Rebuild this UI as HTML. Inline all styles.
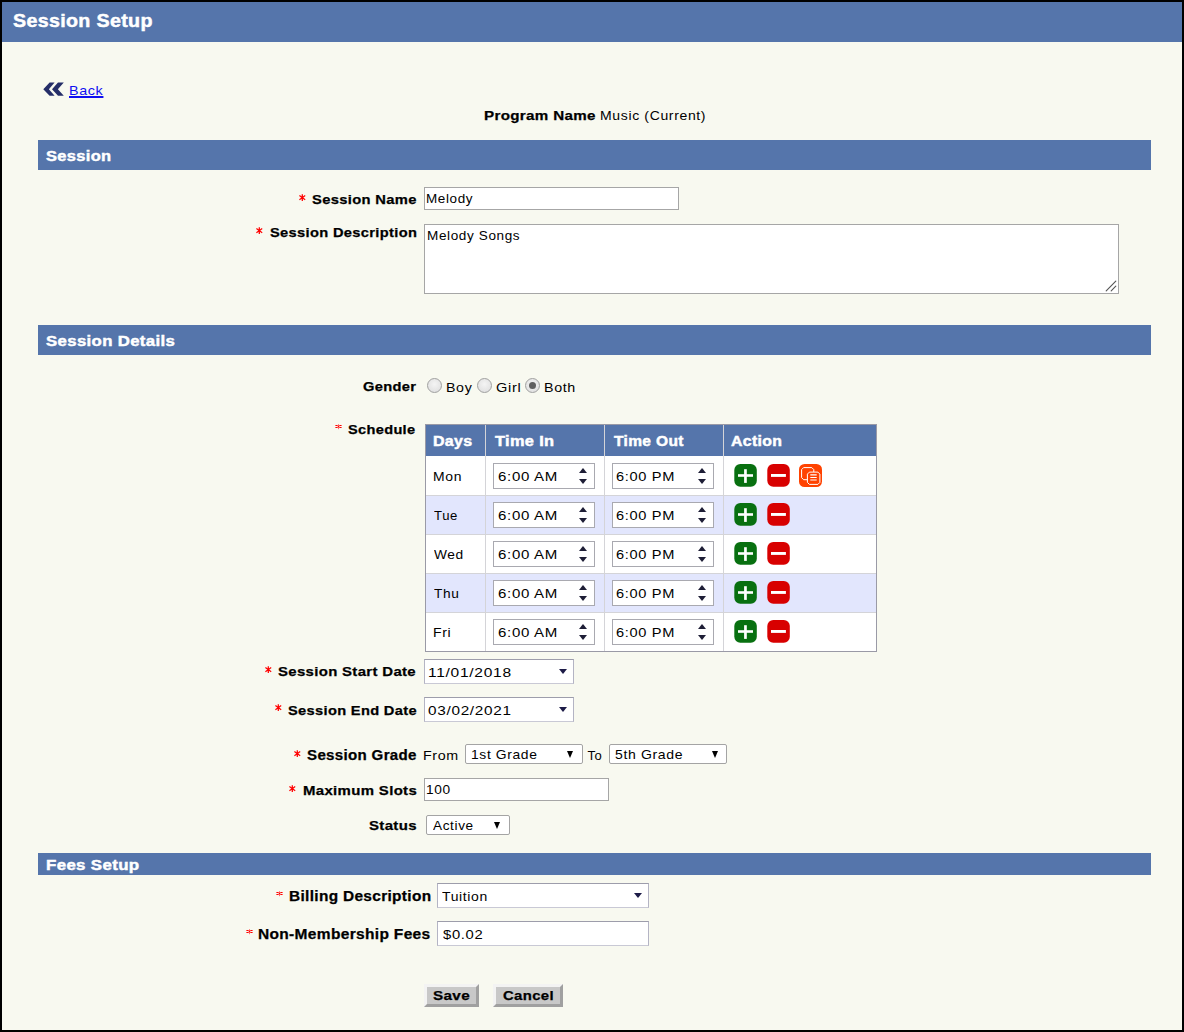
<!DOCTYPE html>
<html><head><meta charset="utf-8"><style>
html,body{margin:0;padding:0;}
body{width:1184px;height:1032px;position:relative;overflow:hidden;background:#000;font-family:"Liberation Sans",sans-serif;color:#000;}
#pg{position:absolute;left:2px;top:2px;width:1180px;height:1028px;background:#f8f9f0;}
.a{position:absolute;}
.tx{position:absolute;white-space:nowrap;transform-origin:0 0;}
.bar{position:absolute;background:#5575ab;}
.inp{position:absolute;background:#fff;border:1px solid #a6a6a6;box-sizing:border-box;}
.sel{position:absolute;background:#fff;border:1px solid;border-color:#9d9dab #b4b4c4 #c9c9d5 #b4b4c4;box-sizing:border-box;}
.radio{position:absolute;width:15px;height:15px;border-radius:50%;box-sizing:border-box;border:1px solid #a0a0a0;background:radial-gradient(circle at 50% 40%,#f4f4f4 0,#dcdcdc 100%);}
.radio.on::after{content:"";position:absolute;left:3px;top:3px;width:7px;height:7px;border-radius:50%;background:#606060;}
.tin{position:absolute;width:102px;height:26px;box-sizing:border-box;border:1px solid #a9a9b0;background:#fff;}
.tin .up{position:absolute;left:85px;top:4px;width:0;height:0;border-left:4.8px solid transparent;border-right:4.8px solid transparent;border-bottom:5px solid #1e1e36;}
.tin .dn{position:absolute;left:85px;top:15px;width:0;height:0;border-left:4.8px solid transparent;border-right:4.8px solid transparent;border-top:5px solid #1e1e36;}
.btn{position:absolute;width:23px;height:23px;border-radius:6px;}
.gplus{background:#0b6e12;}
.gplus::before{content:"";position:absolute;left:4px;top:10px;width:15px;height:3px;background:#fff;}
.gplus::after{content:"";position:absolute;left:10px;top:4px;width:3px;height:15px;background:#fff;}
.rminus{background:#d60a0a;}
.rminus::before{content:"";position:absolute;left:4px;top:10px;width:15px;height:3px;background:#fff;}
.ocopy{background:#ff4a0a;}
.tri{position:absolute;width:0;height:0;border-left:4.8px solid transparent;border-right:4.8px solid transparent;border-top:5.5px solid #1d1b47;}
.gsel{position:absolute;height:20px;box-sizing:border-box;border:1px solid #a4a4a4;border-radius:2px;background:#fff;}
.bt{position:absolute;width:0;height:0;border-left:3.5px solid transparent;border-right:3.5px solid transparent;border-top:7px solid #000;}
.pbtn{position:absolute;height:23px;box-sizing:border-box;border:3px solid;border-color:#f3f3f3 #a0a0a0 #a0a0a0 #f3f3f3;background:#c8c8c8;}
.st2{position:absolute;}
</style></head><body>
<div id="pg"></div>
<div class="bar" style="left:2px;top:2px;width:1180px;height:40px;"></div>
<svg class="a" style="left:40px;top:78px" width="30" height="22" viewBox="0 0 30 22">
<polygon points="3.3,11.2 9.6,4.6 14.6,4.6 8.9,11.2 14.6,17.7 9.6,17.7" fill="#252e68"/>
<polygon points="12.0,11.2 18.0,4.6 23.8,4.6 17.9,11.2 23.8,17.7 18.0,17.7" fill="#252e68"/></svg>
<div class="bar" style="left:38px;top:140px;width:1113px;height:30px;"></div>
<div class="inp" style="left:424px;top:187px;width:255px;height:23px;"></div>
<div class="inp" style="left:424px;top:224px;width:695px;height:70px;"></div>
<div class="bar" style="left:38px;top:325px;width:1113px;height:30px;"></div>
<div class="radio" style="left:427px;top:378px;"></div>
<div class="radio" style="left:477px;top:378px;"></div>
<div class="radio on" style="left:525px;top:378px;"></div>
<div class="a" style="left:425px;top:424px;width:452px;height:228px;box-sizing:border-box;border:1px solid #9a9aa6;background:#fff;"></div>
<div class="a" style="left:426px;top:425px;width:450px;height:31px;background:#5575ab;"></div>
<div class="a" style="left:426px;top:496px;width:450px;height:38px;background:#e2e6fd;"></div>
<div class="a" style="left:426px;top:574px;width:450px;height:38px;background:#e2e6fd;"></div>
<div class="a" style="left:426px;top:495px;width:450px;height:1px;background:#d4d4d8;"></div>
<div class="a" style="left:426px;top:534px;width:450px;height:1px;background:#d4d4d8;"></div>
<div class="a" style="left:426px;top:573px;width:450px;height:1px;background:#d4d4d8;"></div>
<div class="a" style="left:426px;top:612px;width:450px;height:1px;background:#d4d4d8;"></div>
<div class="a" style="left:485px;top:425px;width:1px;height:226px;background:#d4d4d8;"></div>
<div class="a" style="left:604px;top:425px;width:1px;height:226px;background:#d4d4d8;"></div>
<div class="a" style="left:723px;top:425px;width:1px;height:226px;background:#d4d4d8;"></div>
<div class="tin" style="left:493px;top:463px;"><i class="up"></i><i class="dn"></i></div>
<div class="tin" style="left:612px;top:463px;"><i class="up"></i><i class="dn"></i></div>
<svg class="a" style="left:734px;top:464px" width="23" height="23" viewBox="0 0 23 23"><rect x="0.3" y="0" width="22.5" height="22.7" rx="6" fill="#087010"/><rect x="4" y="10.2" width="15" height="2.6" fill="#fff"/><rect x="10.1" y="5.2" width="2.7" height="13.7" fill="#fff"/></svg>
<svg class="a" style="left:767px;top:464px" width="23" height="23" viewBox="0 0 23 23"><rect x="0.3" y="0" width="22.5" height="22.7" rx="6" fill="#d80000"/><rect x="4" y="10" width="14.9" height="2.9" fill="#fff"/></svg>
<div class="tin" style="left:493px;top:502px;"><i class="up"></i><i class="dn"></i></div>
<div class="tin" style="left:612px;top:502px;"><i class="up"></i><i class="dn"></i></div>
<svg class="a" style="left:734px;top:503px" width="23" height="23" viewBox="0 0 23 23"><rect x="0.3" y="0" width="22.5" height="22.7" rx="6" fill="#087010"/><rect x="4" y="10.2" width="15" height="2.6" fill="#fff"/><rect x="10.1" y="5.2" width="2.7" height="13.7" fill="#fff"/></svg>
<svg class="a" style="left:767px;top:503px" width="23" height="23" viewBox="0 0 23 23"><rect x="0.3" y="0" width="22.5" height="22.7" rx="6" fill="#d80000"/><rect x="4" y="10" width="14.9" height="2.9" fill="#fff"/></svg>
<div class="tin" style="left:493px;top:541px;"><i class="up"></i><i class="dn"></i></div>
<div class="tin" style="left:612px;top:541px;"><i class="up"></i><i class="dn"></i></div>
<svg class="a" style="left:734px;top:542px" width="23" height="23" viewBox="0 0 23 23"><rect x="0.3" y="0" width="22.5" height="22.7" rx="6" fill="#087010"/><rect x="4" y="10.2" width="15" height="2.6" fill="#fff"/><rect x="10.1" y="5.2" width="2.7" height="13.7" fill="#fff"/></svg>
<svg class="a" style="left:767px;top:542px" width="23" height="23" viewBox="0 0 23 23"><rect x="0.3" y="0" width="22.5" height="22.7" rx="6" fill="#d80000"/><rect x="4" y="10" width="14.9" height="2.9" fill="#fff"/></svg>
<div class="tin" style="left:493px;top:580px;"><i class="up"></i><i class="dn"></i></div>
<div class="tin" style="left:612px;top:580px;"><i class="up"></i><i class="dn"></i></div>
<svg class="a" style="left:734px;top:581px" width="23" height="23" viewBox="0 0 23 23"><rect x="0.3" y="0" width="22.5" height="22.7" rx="6" fill="#087010"/><rect x="4" y="10.2" width="15" height="2.6" fill="#fff"/><rect x="10.1" y="5.2" width="2.7" height="13.7" fill="#fff"/></svg>
<svg class="a" style="left:767px;top:581px" width="23" height="23" viewBox="0 0 23 23"><rect x="0.3" y="0" width="22.5" height="22.7" rx="6" fill="#d80000"/><rect x="4" y="10" width="14.9" height="2.9" fill="#fff"/></svg>
<div class="tin" style="left:493px;top:619px;"><i class="up"></i><i class="dn"></i></div>
<div class="tin" style="left:612px;top:619px;"><i class="up"></i><i class="dn"></i></div>
<svg class="a" style="left:734px;top:620px" width="23" height="23" viewBox="0 0 23 23"><rect x="0.3" y="0" width="22.5" height="22.7" rx="6" fill="#087010"/><rect x="4" y="10.2" width="15" height="2.6" fill="#fff"/><rect x="10.1" y="5.2" width="2.7" height="13.7" fill="#fff"/></svg>
<svg class="a" style="left:767px;top:620px" width="23" height="23" viewBox="0 0 23 23"><rect x="0.3" y="0" width="22.5" height="22.7" rx="6" fill="#d80000"/><rect x="4" y="10" width="14.9" height="2.9" fill="#fff"/></svg>
<div class="sel" style="left:424px;top:659px;width:150px;height:25px;"><i class="tri" style="left:134px;top:9px"></i></div>
<div class="sel" style="left:424px;top:697px;width:150px;height:25px;"><i class="tri" style="left:134px;top:9px"></i></div>
<div class="gsel" style="left:465px;top:744px;width:118px;"><i class="bt" style="left:101px;top:6px"></i></div>
<div class="gsel" style="left:609px;top:744px;width:118px;"><i class="bt" style="left:102px;top:6px"></i></div>
<div class="inp" style="left:424px;top:778px;width:185px;height:23px;"></div>
<div class="gsel" style="left:426px;top:815px;width:84px;"><i class="bt" style="left:67px;top:6px"></i></div>
<div class="bar" style="left:38px;top:853px;width:1113px;height:22px;"></div>
<div class="sel" style="left:437px;top:883px;width:212px;height:25px;"><i class="tri" style="left:196px;top:9px"></i></div>
<div class="sel" style="left:437px;top:921px;width:212px;height:25px;"></div>
<div class="pbtn" style="left:424px;top:984px;width:55px;"></div>
<div class="pbtn" style="left:493px;top:984px;width:70px;"></div>
<svg class="a" style="left:298.8px;top:193.8px" width="7" height="8" viewBox="0 0 7 8"><path d="M3.3 0.2V7.1M0.4 1.6L6.2 5.7M0.4 5.7L6.2 1.6" stroke="#ff0000" stroke-width="1.25" fill="none"/></svg>
<svg class="a" style="left:256.2px;top:226.5px" width="7" height="8" viewBox="0 0 7 8"><path d="M3.3 0.2V7.1M0.4 1.6L6.2 5.7M0.4 5.7L6.2 1.6" stroke="#ff0000" stroke-width="1.25" fill="none"/></svg>
<svg class="a" style="left:265.4px;top:665.5999999999999px" width="7" height="8" viewBox="0 0 7 8"><path d="M3.3 0.2V7.1M0.4 1.6L6.2 5.7M0.4 5.7L6.2 1.6" stroke="#ff0000" stroke-width="1.25" fill="none"/></svg>
<svg class="a" style="left:275px;top:704.3px" width="7" height="8" viewBox="0 0 7 8"><path d="M3.3 0.2V7.1M0.4 1.6L6.2 5.7M0.4 5.7L6.2 1.6" stroke="#ff0000" stroke-width="1.25" fill="none"/></svg>
<svg class="a" style="left:294px;top:749.5999999999999px" width="7" height="8" viewBox="0 0 7 8"><path d="M3.3 0.2V7.1M0.4 1.6L6.2 5.7M0.4 5.7L6.2 1.6" stroke="#ff0000" stroke-width="1.25" fill="none"/></svg>
<svg class="a" style="left:289px;top:785.1999999999999px" width="7" height="8" viewBox="0 0 7 8"><path d="M3.3 0.2V7.1M0.4 1.6L6.2 5.7M0.4 5.7L6.2 1.6" stroke="#ff0000" stroke-width="1.25" fill="none"/></svg>
<svg class="a" style="left:799px;top:464px" width="23" height="23" viewBox="0 0 23 23">
<rect x="0" y="0" width="23" height="23" rx="5.5" fill="#ff4200"/>
<path d="M4.6 3.6H12.8L14.8 5.6V13.7L12.8 15.7H4.6L2.6 13.7V5.6Z" fill="none" stroke="#fff" stroke-width="1"/>
<path d="M10.4 8.1H18.9L20.9 10.1V18.4L18.9 20.4H10.4L8.4 18.4V10.1Z" fill="#ff4200" stroke="#fff" stroke-width="1"/>
<path d="M11.3 10.8H17.7M11.3 13.5H17.7M11.3 16H17.7" stroke="#fff" stroke-width="1.2"/>
</svg>
<svg class="a" style="left:1104px;top:279px" width="14" height="14" viewBox="0 0 14 14"><path d="M2.2 11.8L11.8 2.2M7.2 11.8L11.8 7.2" stroke="#555" stroke-width="1.15" stroke-linecap="round"/></svg>
<svg class="a" style="left:335px;top:424px" width="7" height="6" viewBox="0 0 7 6"><path d="M3.5 0.2V5.2" stroke="#ff6060" stroke-width="0.9"/><path d="M0.4 1.5H2.7M4.3 1.5H6.6M0.4 3.5H2.7M4.3 3.5H6.6" stroke="#ff0000" stroke-width="1"/><circle cx="3.5" cy="2.5" r="0.8" fill="#ff0000"/></svg>
<svg class="a" style="left:276px;top:891.3px" width="7" height="6" viewBox="0 0 7 6"><path d="M3.5 0.2V5.2" stroke="#ff6060" stroke-width="0.9"/><path d="M0.4 1.5H2.7M4.3 1.5H6.6M0.4 3.5H2.7M4.3 3.5H6.6" stroke="#ff0000" stroke-width="1"/><circle cx="3.5" cy="2.5" r="0.8" fill="#ff0000"/></svg>
<svg class="a" style="left:246px;top:929px" width="7" height="6" viewBox="0 0 7 6"><path d="M3.5 0.2V5.2" stroke="#ff6060" stroke-width="0.9"/><path d="M0.4 1.5H2.7M4.3 1.5H6.6M0.4 3.5H2.7M4.3 3.5H6.6" stroke="#ff0000" stroke-width="1"/><circle cx="3.5" cy="2.5" r="0.8" fill="#ff0000"/></svg>
<div class="tx" style="left:12.61px;top:10px;font-weight:bold;font-size:18px;line-height:22px;color:#ffffff;letter-spacing:0.3px;transform:scaleX(1.0921);-webkit-text-stroke:0.45px #ffffff;">Session Setup</div>
<div class="tx" style="left:68.90px;top:82px;font-weight:normal;font-size:13px;line-height:17px;color:#1010f2;letter-spacing:0.6px;transform:scaleX(1.1000);text-decoration:underline;text-decoration-thickness:1.5px;">Back</div>
<div class="tx" style="left:484.44px;top:107px;font-weight:bold;font-size:13px;line-height:17px;color:#000000;letter-spacing:0.3px;transform:scaleX(1.1638);-webkit-text-stroke:0.25px #000000;">Program Name</div>
<div class="tx" style="left:599.92px;top:107px;font-weight:normal;font-size:13px;line-height:17px;color:#000000;letter-spacing:0.6px;transform:scaleX(1.0771);">Music (Current)</div>
<div class="tx" style="left:45.90px;top:146px;font-weight:bold;font-size:15px;line-height:19px;color:#ffffff;letter-spacing:0.3px;transform:scaleX(1.0983);-webkit-text-stroke:0.45px #ffffff;">Session</div>
<div class="tx" style="left:311.77px;top:191px;font-weight:bold;font-size:13px;line-height:17px;color:#000000;letter-spacing:0.3px;transform:scaleX(1.1330);-webkit-text-stroke:0.25px #000000;">Session Name</div>
<div class="tx" style="left:425.66px;top:190px;font-weight:normal;font-size:13px;line-height:17px;color:#000000;letter-spacing:0.6px;transform:scaleX(1.0364);">Melody</div>
<div class="tx" style="left:269.57px;top:224px;font-weight:bold;font-size:13px;line-height:17px;color:#000000;letter-spacing:0.3px;transform:scaleX(1.1264);-webkit-text-stroke:0.25px #000000;">Session Description</div>
<div class="tx" style="left:426.86px;top:227px;font-weight:normal;font-size:13px;line-height:17px;color:#000000;letter-spacing:0.6px;transform:scaleX(1.0409);">Melody Songs</div>
<div class="tx" style="left:46.08px;top:331px;font-weight:bold;font-size:15px;line-height:19px;color:#ffffff;letter-spacing:0.3px;transform:scaleX(1.1193);-webkit-text-stroke:0.45px #ffffff;">Session Details</div>
<div class="tx" style="left:362.77px;top:378px;font-weight:bold;font-size:13px;line-height:17px;color:#000000;letter-spacing:0.3px;transform:scaleX(1.1261);-webkit-text-stroke:0.25px #000000;">Gender</div>
<div class="tx" style="left:445.91px;top:379px;font-weight:normal;font-size:13px;line-height:17px;color:#000000;letter-spacing:0.6px;transform:scaleX(1.0909);">Boy</div>
<div class="tx" style="left:495.88px;top:379px;font-weight:normal;font-size:13px;line-height:17px;color:#000000;letter-spacing:0.6px;transform:scaleX(1.1200);">Girl</div>
<div class="tx" style="left:543.90px;top:379px;font-weight:normal;font-size:13px;line-height:17px;color:#000000;letter-spacing:0.6px;transform:scaleX(1.0963);">Both</div>
<div class="tx" style="left:347.78px;top:421px;font-weight:bold;font-size:13px;line-height:17px;color:#000000;letter-spacing:0.3px;transform:scaleX(1.1203);-webkit-text-stroke:0.25px #000000;">Schedule</div>
<div class="tx" style="left:432.66px;top:432px;font-weight:bold;font-size:14px;line-height:18px;color:#ffffff;letter-spacing:0.3px;transform:scaleX(1.1394);-webkit-text-stroke:0.45px #ffffff;">Days</div>
<div class="tx" style="left:494.60px;top:432px;font-weight:bold;font-size:14px;line-height:18px;color:#ffffff;letter-spacing:0.3px;transform:scaleX(1.1680);-webkit-text-stroke:0.45px #ffffff;">Time In</div>
<div class="tx" style="left:613.90px;top:432px;font-weight:bold;font-size:14px;line-height:18px;color:#ffffff;letter-spacing:0.3px;transform:scaleX(1.1097);-webkit-text-stroke:0.45px #ffffff;">Time Out</div>
<div class="tx" style="left:730.57px;top:432px;font-weight:bold;font-size:14px;line-height:18px;color:#ffffff;letter-spacing:0.3px;transform:scaleX(1.1302);-webkit-text-stroke:0.45px #ffffff;">Action</div>
<div class="tx" style="left:278.25px;top:663px;font-weight:bold;font-size:13px;line-height:17px;color:#000000;letter-spacing:0.3px;transform:scaleX(1.1471);-webkit-text-stroke:0.25px #000000;">Session Start Date</div>
<div class="tx" style="left:427.80px;top:664px;font-weight:normal;font-size:13px;line-height:17px;color:#000000;letter-spacing:0.6px;transform:scaleX(1.1956);">11/01/2018</div>
<div class="tx" style="left:287.78px;top:702px;font-weight:bold;font-size:13px;line-height:17px;color:#000000;letter-spacing:0.3px;transform:scaleX(1.1248);-webkit-text-stroke:0.25px #000000;">Session End Date</div>
<div class="tx" style="left:427.82px;top:702px;font-weight:normal;font-size:13px;line-height:17px;color:#000000;letter-spacing:0.6px;transform:scaleX(1.1783);">03/02/2021</div>
<div class="tx" style="left:307.22px;top:746px;font-weight:bold;font-size:14px;line-height:18px;color:#000000;letter-spacing:0.3px;transform:scaleX(1.0770);-webkit-text-stroke:0.25px #000000;">Session Grade</div>
<div class="tx" style="left:423.00px;top:747px;font-weight:normal;font-size:13px;line-height:17px;color:#000000;letter-spacing:0.6px;transform:scaleX(1.0967);">From</div>
<div class="tx" style="left:471.33px;top:746px;font-weight:normal;font-size:13px;line-height:17px;color:#000000;letter-spacing:0.6px;transform:scaleX(1.0650);">1st Grade</div>
<div class="tx" style="left:587.40px;top:747px;font-weight:normal;font-size:13px;line-height:17px;color:#000000;letter-spacing:0.6px;transform:scaleX(1.0000);">To</div>
<div class="tx" style="left:615.12px;top:746px;font-weight:normal;font-size:13px;line-height:17px;color:#000000;letter-spacing:0.6px;transform:scaleX(1.0787);">5th Grade</div>
<div class="tx" style="left:302.55px;top:782px;font-weight:bold;font-size:13px;line-height:17px;color:#000000;letter-spacing:0.3px;transform:scaleX(1.1495);-webkit-text-stroke:0.25px #000000;">Maximum Slots</div>
<div class="tx" style="left:426.15px;top:781px;font-weight:normal;font-size:13px;line-height:17px;color:#000000;letter-spacing:0.6px;transform:scaleX(1.0545);">100</div>
<div class="tx" style="left:368.75px;top:817px;font-weight:bold;font-size:13px;line-height:17px;color:#000000;letter-spacing:0.3px;transform:scaleX(1.1525);-webkit-text-stroke:0.25px #000000;">Status</div>
<div class="tx" style="left:432.70px;top:817px;font-weight:normal;font-size:13px;line-height:17px;color:#000000;letter-spacing:0.6px;transform:scaleX(1.0447);">Active</div>
<div class="tx" style="left:46.27px;top:855px;font-weight:bold;font-size:15px;line-height:19px;color:#ffffff;letter-spacing:0.3px;transform:scaleX(1.1259);-webkit-text-stroke:0.45px #ffffff;">Fees Setup</div>
<div class="tx" style="left:289.10px;top:887px;font-weight:bold;font-size:14px;line-height:18px;color:#000000;letter-spacing:0.3px;transform:scaleX(1.1008);-webkit-text-stroke:0.25px #000000;">Billing Description</div>
<div class="tx" style="left:442.20px;top:888px;font-weight:normal;font-size:13px;line-height:17px;color:#000000;letter-spacing:0.6px;transform:scaleX(1.0738);">Tuition</div>
<div class="tx" style="left:258.39px;top:925px;font-weight:bold;font-size:14px;line-height:18px;color:#000000;letter-spacing:0.3px;transform:scaleX(1.1071);-webkit-text-stroke:0.25px #000000;">Non-Membership Fees</div>
<div class="tx" style="left:442.70px;top:926px;font-weight:normal;font-size:13px;line-height:17px;color:#000000;letter-spacing:0.6px;transform:scaleX(1.1382);">$0.02</div>
<div class="tx" style="left:432.53px;top:987px;font-weight:bold;font-size:13px;line-height:17px;color:#000000;letter-spacing:0.3px;transform:scaleX(1.1733);-webkit-text-stroke:0.25px #000000;">Save</div>
<div class="tx" style="left:502.85px;top:987px;font-weight:bold;font-size:13px;line-height:17px;color:#000000;letter-spacing:0.3px;transform:scaleX(1.1452);-webkit-text-stroke:0.25px #000000;">Cancel</div>
<div class="tx" style="left:433.33px;top:468px;font-weight:normal;font-size:13px;line-height:17px;color:#000000;letter-spacing:0.6px;transform:scaleX(1.0720);">Mon</div>
<div class="tx" style="left:497.54px;top:468px;font-weight:normal;font-size:13px;line-height:17px;color:#000000;letter-spacing:0.6px;transform:scaleX(1.1571);">6:00 AM</div>
<div class="tx" style="left:616.28px;top:468px;font-weight:normal;font-size:13px;line-height:17px;color:#000000;letter-spacing:0.6px;transform:scaleX(1.1240);">6:00 PM</div>
<div class="tx" style="left:433.80px;top:507px;font-weight:normal;font-size:13px;line-height:17px;color:#000000;letter-spacing:0.6px;transform:scaleX(1.0087);">Tue</div>
<div class="tx" style="left:497.54px;top:507px;font-weight:normal;font-size:13px;line-height:17px;color:#000000;letter-spacing:0.6px;transform:scaleX(1.1571);">6:00 AM</div>
<div class="tx" style="left:616.28px;top:507px;font-weight:normal;font-size:13px;line-height:17px;color:#000000;letter-spacing:0.6px;transform:scaleX(1.1240);">6:00 PM</div>
<div class="tx" style="left:433.80px;top:546px;font-weight:normal;font-size:13px;line-height:17px;color:#000000;letter-spacing:0.6px;transform:scaleX(1.0556);">Wed</div>
<div class="tx" style="left:497.54px;top:546px;font-weight:normal;font-size:13px;line-height:17px;color:#000000;letter-spacing:0.6px;transform:scaleX(1.1571);">6:00 AM</div>
<div class="tx" style="left:616.28px;top:546px;font-weight:normal;font-size:13px;line-height:17px;color:#000000;letter-spacing:0.6px;transform:scaleX(1.1240);">6:00 PM</div>
<div class="tx" style="left:433.80px;top:585px;font-weight:normal;font-size:13px;line-height:17px;color:#000000;letter-spacing:0.6px;transform:scaleX(1.0522);">Thu</div>
<div class="tx" style="left:497.54px;top:585px;font-weight:normal;font-size:13px;line-height:17px;color:#000000;letter-spacing:0.6px;transform:scaleX(1.1571);">6:00 AM</div>
<div class="tx" style="left:616.28px;top:585px;font-weight:normal;font-size:13px;line-height:17px;color:#000000;letter-spacing:0.6px;transform:scaleX(1.1240);">6:00 PM</div>
<div class="tx" style="left:432.72px;top:624px;font-weight:normal;font-size:13px;line-height:17px;color:#000000;letter-spacing:0.6px;transform:scaleX(1.0800);">Fri</div>
<div class="tx" style="left:497.54px;top:624px;font-weight:normal;font-size:13px;line-height:17px;color:#000000;letter-spacing:0.6px;transform:scaleX(1.1571);">6:00 AM</div>
<div class="tx" style="left:616.28px;top:624px;font-weight:normal;font-size:13px;line-height:17px;color:#000000;letter-spacing:0.6px;transform:scaleX(1.1240);">6:00 PM</div>
</body></html>
